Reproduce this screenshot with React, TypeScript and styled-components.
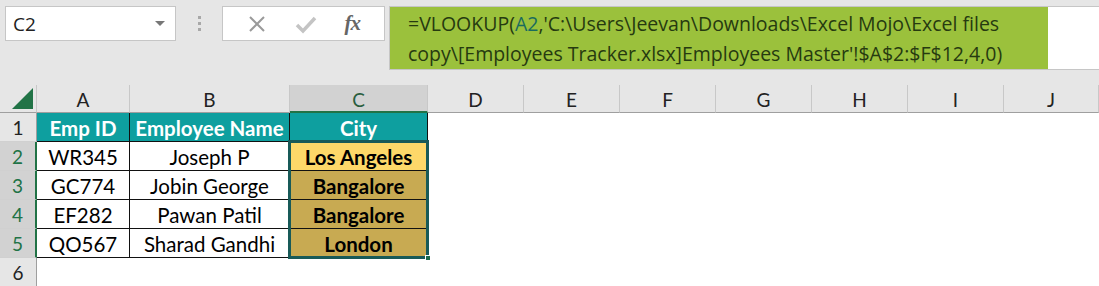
import { Fragment } from "react";
import styled, { createGlobalStyle } from "styled-components";

const GlobalStyle = createGlobalStyle`
  html, body {
    margin: 0;
    padding: 0;
    background: #e6e6e6;
  }
  * {
    box-sizing: border-box;
  }
`;

const Page = styled.div`
  width: 1099px;
  height: 286px;
  overflow: hidden;
  background: #e6e6e6;
  font-family: "Open Sans", "Noto Sans", sans-serif;
`;

const Toolbar = styled.div`
  height: 85px;
  display: flex;
  align-items: flex-start;
  padding: 6px 0 0 5px;
`;

const NameBox = styled.div`
  width: 171px;
  height: 35px;
  background: #fff;
  border: 1px solid #c6c6c6;
  display: flex;
  align-items: center;
  justify-content: space-between;
  padding: 0 10px 0 7px;
  font-size: 19px;
  color: #222;
`;

const Caret = styled.span`
  width: 0;
  height: 0;
  border-left: 5px solid transparent;
  border-right: 5px solid transparent;
  border-top: 5px solid #777;
`;

const Grip = styled.div`
  width: 46px;
  height: 35px;
  display: flex;
  flex-direction: column;
  align-items: center;
  justify-content: center;
  gap: 3px;
  span {
    width: 3px;
    height: 3px;
    background: #a8a8a8;
  }
`;

const FxBox = styled.div`
  width: 163px;
  height: 35px;
  background: #fff;
  border: 1px solid #c6c6c6;
  display: flex;
  align-items: center;
  justify-content: space-around;
  padding: 0 10px;
`;

const FxLabel = styled.span`
  font-family: "Liberation Serif", serif;
  font-style: italic;
  font-weight: bold;
  font-size: 21px;
  color: #666;
  letter-spacing: -1px;
`;

const FormulaArea = styled.div`
  margin-left: 4px;
  flex: 1;
  height: 64px;
  background: #fff;
  border-top: 1px solid #c6c6c6;
  border-bottom: 1px solid #c6c6c6;
  border-left: 1px solid #c6c6c6;
  display: flex;
`;

const Formula = styled.div`
  width: 658px;
  background: #9bc13c;
  color: #263a10;
  font-size: 19.5px;
  line-height: 30px;
  padding: 2px 0 0 18px;
  white-space: nowrap;
`;

const Ref = styled.span`
  color: #1a6b5e;
`;

const SheetWrap = styled.div`
  position: relative;
`;

const Grid = styled.div`
  display: grid;
  grid-template-columns: 37px 93px 160px 138px 96px 96px 96px 96px 96px 96px 95px;
  grid-template-rows: 28px repeat(6, 29px);
  background: #fff;
`;

const ColHead = styled.div<{ $active?: boolean }>`
  background: ${(p) => (p.$active ? "#d2d2d2" : "#e6e6e6")};
  border-right: 1px solid #c8c8c8;
  border-bottom: ${(p) => (p.$active ? "2px solid #217346" : "1px solid #9f9f9f")};
  display: flex;
  align-items: center;
  justify-content: center;
  font-family: "Lato", "Open Sans", sans-serif;
  font-size: 19px;
  color: ${(p) => (p.$active ? "#2a5e3e" : "#222")};
  padding-top: 2px;
`;

const Corner = styled.div`
  background: #e6e6e6;
  border-right: 1px solid #c8c8c8;
  border-bottom: 1px solid #9f9f9f;
  display: flex;
  align-items: flex-end;
  justify-content: flex-end;
  padding: 0 3px 3px 0;
`;

const RowHead = styled.div<{ $active?: boolean }>`
  background: ${(p) => (p.$active ? "#d2d2d2" : "#e6e6e6")};
  border-right: ${(p) => (p.$active ? "2px solid #217346" : "1px solid #9f9f9f")};
  border-bottom: 1px solid #d0d0d0;
  display: flex;
  align-items: center;
  justify-content: center;
  font-family: "Lato", "Open Sans", sans-serif;
  font-size: 19px;
  color: ${(p) => (p.$active ? "#217346" : "#222")};
`;

const Cell = styled.div<{ $bg?: string; $head?: boolean; $bold?: boolean; $table?: boolean }>`
  background: ${(p) => p.$bg || "#fff"};
  display: flex;
  align-items: center;
  justify-content: center;
  font-family: "Lato", "Open Sans", sans-serif;
  font-size: 20.5px;
  font-weight: ${(p) => (p.$bold || p.$head ? 700 : 400)};
  color: ${(p) => (p.$head ? "#fff" : "#000")};
  white-space: nowrap;
  border-right: ${(p) => (p.$table ? "1px solid #111" : "none")};
  border-bottom: ${(p) => (p.$table ? "1px solid #111" : "none")};
  padding-top: 1px;
`;

const Selection = styled.div`
  position: absolute;
  left: 288px;
  top: 55px;
  width: 141px;
  height: 119px;
  border: 3px solid #185a58;
  pointer-events: none;
`;

const FillHandle = styled.div`
  position: absolute;
  right: -5px;
  bottom: -5px;
  width: 6px;
  height: 6px;
  background: #1c6a4c;
  border: 1px solid #fff;
`;

const cols = ["A", "B", "C", "D", "E", "F", "G", "H", "I", "J"];

const rows = [
  { id: "WR345", name: "Joseph P", city: "Los Angeles", bg: "#fdd869" },
  { id: "GC774", name: "Jobin George", city: "Bangalore", bg: "#c8aa52" },
  { id: "EF282", name: "Pawan Patil", city: "Bangalore", bg: "#c8aa52" },
  { id: "QO567", name: "Sharad Gandhi", city: "London", bg: "#c8aa52" },
];

const empty = (n: number, key: string) =>
  Array.from({ length: n }, (_, i) => <Cell key={`${key}-${i}`} />);

export default function App() {
  return (
    <Page>
      <GlobalStyle />
      <Toolbar>
        <NameBox>
          C2
          <Caret />
        </NameBox>
        <Grip>
          <span />
          <span />
          <span />
        </Grip>
        <FxBox>
          <svg width="20" height="20" viewBox="0 0 20 20">
            <path d="M3 3 L17 17 M17 3 L3 17" stroke="#9a9a9a" strokeWidth="2" />
          </svg>
          <svg width="22" height="20" viewBox="0 0 22 20">
            <path d="M2 11 L8 17 L20 4" stroke="#c4c4c4" strokeWidth="3.5" fill="none" />
          </svg>
          <FxLabel>fx</FxLabel>
        </FxBox>
        <FormulaArea>
          <Formula>
            =VLOOKUP(<Ref>A2</Ref>,'C:\Users\Jeevan\Downloads\Excel Mojo\Excel files
            <br />
            copy\[Employees Tracker.xlsx]Employees Master'!$A$2:$F$12,4,0)
          </Formula>
        </FormulaArea>
      </Toolbar>
      <SheetWrap>
        <Grid>
          <Corner>
            <svg width="21" height="21" viewBox="0 0 21 21">
              <path d="M21 0 L21 21 L0 21 Z" fill="#217346" />
            </svg>
          </Corner>
          {cols.map((c) => (
            <ColHead key={c} $active={c === "C"}>
              {c}
            </ColHead>
          ))}
          <RowHead>1</RowHead>
          <Cell $head $table $bg="#0e9f9f">Emp ID</Cell>
          <Cell $head $table $bg="#0e9f9f">Employee Name</Cell>
          <Cell $head $table $bg="#0e9f9f">City</Cell>
          {empty(7, "r1")}
          {rows.map((r, i) => (
            <Fragment key={r.id}>
              <RowHead $active>{i + 2}</RowHead>
              <Cell $table>{r.id}</Cell>
              <Cell $table>{r.name}</Cell>
              <Cell $table $bold $bg={r.bg}>
                {r.city}
              </Cell>
              {empty(7, `r${i + 2}`)}
            </Fragment>
          ))}
          <RowHead>6</RowHead>
          {empty(10, "r6")}
        </Grid>
        <Selection>
          <FillHandle />
        </Selection>
      </SheetWrap>
    </Page>
  );
}
